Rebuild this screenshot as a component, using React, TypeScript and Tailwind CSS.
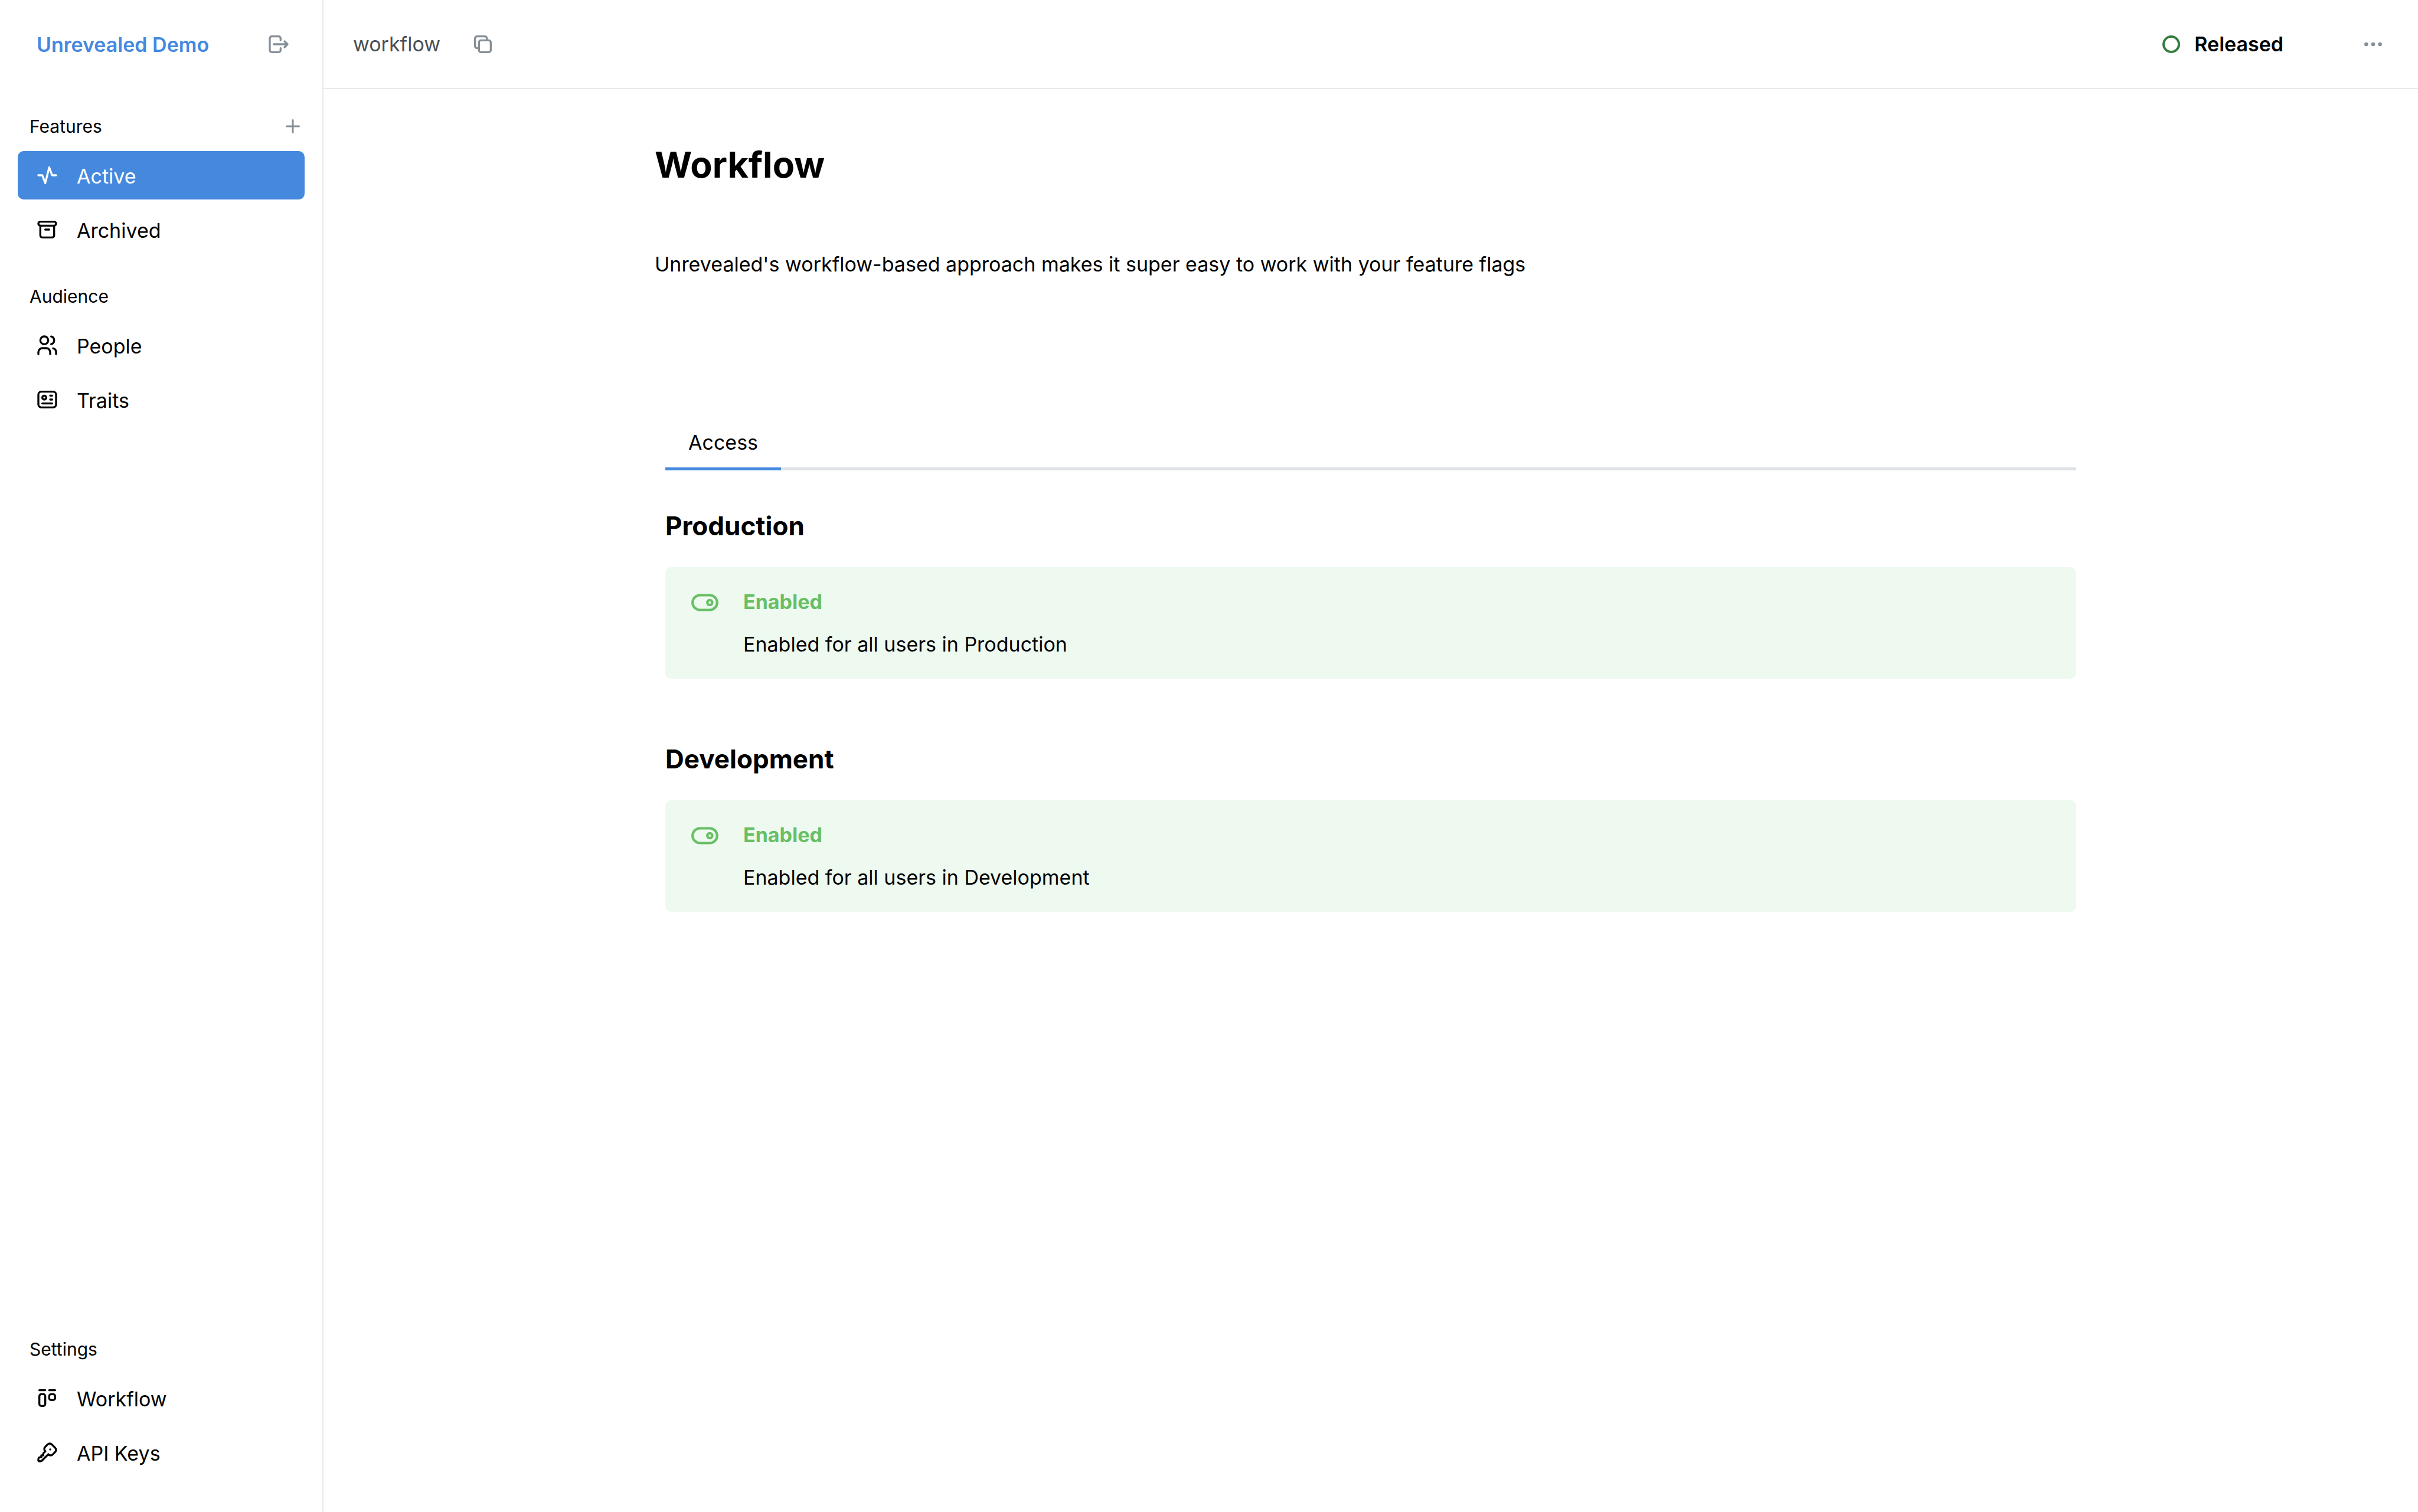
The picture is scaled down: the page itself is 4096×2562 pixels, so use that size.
import type { ReactNode } from "react";

type IconProps = { className: string; children: ReactNode };

function Icon({ className, children }: IconProps) {
  return (
    <svg
      className={className}
      viewBox="0 0 24 24"
      fill="none"
      stroke="currentColor"
      strokeWidth={2}
      strokeLinecap="round"
      strokeLinejoin="round"
      aria-hidden="true"
    >
      {children}
    </svg>
  );
}

const icons = {
  activity: <path d="M3 12h4l3 8l4 -16l3 8h4" />,
  archive: (
    <>
      <rect x="3" y="4" width="18" height="4" rx="2" />
      <path d="M5 8v10a2 2 0 0 0 2 2h10a2 2 0 0 0 2 -2v-10" />
      <path d="M10 12h4" />
    </>
  ),
  users: (
    <>
      <circle cx="9" cy="7" r="4" />
      <path d="M3 21v-2a4 4 0 0 1 4 -4h4a4 4 0 0 1 4 4v2" />
      <path d="M16 3.13a4 4 0 0 1 0 7.75" />
      <path d="M21 21v-2a4 4 0 0 0 -3 -3.85" />
    </>
  ),
  id: (
    <>
      <rect x="3" y="4" width="18" height="16" rx="3" />
      <circle cx="9" cy="10" r="2" />
      <path d="M15 8h2M15 12h2M7 16h10" />
    </>
  ),
  kanban: (
    <>
      <path d="M4 4h6M14 4h6" />
      <rect x="4" y="8" width="6" height="12" rx="2" />
      <rect x="14" y="8" width="6" height="6" rx="2" />
    </>
  ),
  key: (
    <>
      <path d="M16.555 3.843l3.602 3.602a2.877 2.877 0 0 1 0 4.069l-2.643 2.643a2.877 2.877 0 0 1 -4.069 0l-.301 -.301l-6.558 6.558a2 2 0 0 1 -1.239 .578l-.175 .008h-1.172a1 1 0 0 1 -.993 -.883l-.007 -.117v-1.172a2 2 0 0 1 .467 -1.284l.119 -.13l.414 -.414h2v-2h2v-2l2.144 -2.144l-.301 -.301a2.877 2.877 0 0 1 0 -4.069l2.643 -2.643a2.877 2.877 0 0 1 4.069 0z" />
      <path d="M15 9h.01" />
    </>
  ),
};

type NavEntry = { label: string; icon: keyof typeof icons; active?: boolean };

function NavItem({ label, icon, active }: NavEntry) {
  return (
    <a
      href="#"
      aria-current={active ? "page" : undefined}
      className={
        active
          ? "flex h-[82px] items-center gap-[30px] rounded-[10px] bg-[#4589df] px-[30px] text-white"
          : "flex h-[82px] items-center gap-[30px] rounded-[10px] px-[30px] text-black"
      }
    >
      <Icon className="size-10 shrink-0">{icons[icon]}</Icon>
      <span className="pt-1 text-[34px] leading-[54px]">{label}</span>
    </a>
  );
}

function NavSection({ title, items, action }: { title: string; items: NavEntry[]; action?: ReactNode }) {
  return (
    <section>
      <div className="flex h-11 items-center justify-between pr-0.5 pl-5">
        <h2 className="text-[30px] leading-[44px]">{title}</h2>
        {action}
      </div>
      <nav aria-label={title} className="mt-5 flex flex-col gap-2.5">
        {items.map((item) => (
          <NavItem key={item.label} {...item} />
        ))}
      </nav>
    </section>
  );
}

function Environment({ name }: { name: string }) {
  return (
    <section>
      <h2 className="text-[44px] leading-[60px] font-bold">{name}</h2>
      <div className="mt-10 flex gap-10 rounded-[10px] bg-[#eef9f0] px-[42px] pt-[31px] pb-[30px]">
        <Icon className="mt-1 size-[50px] shrink-0 text-[#68bf65]">
          <circle cx="16" cy="12" r="2" />
          <rect x="2" y="6" width="20" height="12" rx="6" />
        </Icon>
        <div>
          <h3 className="text-[34px] leading-[56px] font-bold text-[#68bf65]">Enabled</h3>
          <p className="mt-4 text-[34px] leading-[56px]">Enabled for all users in {name}</p>
        </div>
      </div>
    </section>
  );
}

export default function App() {
  return (
    <div className="flex min-h-screen bg-white font-['Inter',sans-serif] text-black">
      <aside className="flex w-[548px] shrink-0 flex-col border-r-2 border-[#e9eaef] px-[30px] pb-[60px]">
        <div className="flex h-[150px] items-center justify-between pr-6 pl-8">
          <a href="#" className="pt-0.5 text-[34px] leading-[54px] font-semibold text-[#4589df]">
            Unrevealed Demo
          </a>
          <button type="button" aria-label="Log out" className="text-[#868e96]">
            <Icon className="size-10">
              <path d="M14 8v-2a2 2 0 0 0 -2 -2h-7a2 2 0 0 0 -2 2v12a2 2 0 0 0 2 2h7a2 2 0 0 0 2 -2v-2" />
              <path d="M7 12h14l-3 -3m0 6l3 -3" />
            </Icon>
          </button>
        </div>
        <div className="mt-[42px] flex flex-col gap-[50px]">
          <NavSection
            title="Features"
            items={[
              { label: "Active", icon: "activity", active: true },
              { label: "Archived", icon: "archive" },
            ]}
            action={
              <button type="button" aria-label="Add feature" className="text-[#868e96]">
                <Icon className="size-9">
                  <path d="M12 5v14M5 12h14" />
                </Icon>
              </button>
            }
          />
          <NavSection
            title="Audience"
            items={[
              { label: "People", icon: "users" },
              { label: "Traits", icon: "id" },
            ]}
          />
        </div>
        <div className="mt-auto">
          <NavSection
            title="Settings"
            items={[
              { label: "Workflow", icon: "kanban" },
              { label: "API Keys", icon: "key" },
            ]}
          />
        </div>
      </aside>

      <div className="flex min-w-0 flex-1 flex-col">
        <header className="flex h-[151px] items-center border-b-2 border-[#e9eaef] pr-14 pl-[50px]">
          <span className="text-[34px] leading-[54px] text-[#495057]">workflow</span>
          <button type="button" aria-label="Copy key" className="ml-[52px] text-[#868e96]">
            <Icon className="size-10">
              <rect x="8" y="8" width="12" height="12" rx="2" />
              <path d="M16 8v-2a2 2 0 0 0 -2 -2h-8a2 2 0 0 0 -2 2v8a2 2 0 0 0 2 2h2" />
            </Icon>
          </button>
          <button type="button" className="ml-auto flex items-center gap-6">
            <span className="size-[30px] rounded-full border-4 border-[#347d3f]" />
            <span className="text-[34px] leading-[54px] font-semibold">Released</span>
          </button>
          <button type="button" aria-label="More actions" className="ml-[132px] text-[#868e96]">
            <Icon className="size-10">
              <circle cx="5" cy="12" r="1" />
              <circle cx="12" cy="12" r="1" />
              <circle cx="19" cy="12" r="1" />
            </Icon>
          </button>
        </header>

        <main className="mx-auto w-full max-w-[2426px] pt-[83px]">
          <h1 className="text-[61px] leading-[90px] font-bold">Workflow</h1>
          <p className="mt-[96px] text-[34px] leading-[56px]">
            Unrevealed's workflow-based approach makes it super easy to work with your feature flags
          </p>
          <div className="mt-[234px] px-[18px]">
            <div role="tablist" className="flex border-b-[5px] border-[#dee2e6]">
              <button
                type="button"
                role="tab"
                aria-selected="true"
                className="-mb-[5px] border-b-[5px] border-[#4589df] px-[39px] pt-3 pb-[14px] text-[34px] leading-[56px]"
              >
                Access
              </button>
            </div>
            <div role="tabpanel" className="mt-16 flex flex-col gap-[106px]">
              <Environment name="Production" />
              <Environment name="Development" />
            </div>
          </div>
        </main>
      </div>
    </div>
  );
}
